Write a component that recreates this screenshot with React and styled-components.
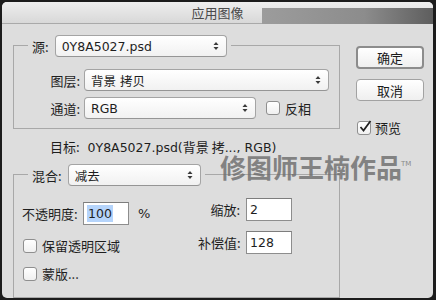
import React from "react";
import styled, { createGlobalStyle } from "styled-components";

const Global = createGlobalStyle`
  html, body {
    margin: 0;
    padding: 0;
    background: #1c1c1c;
  }
  body {
    font-family: "DejaVu Sans", "Noto Sans CJK SC", sans-serif;
    font-size: 13px;
    color: #1e1e1e;
  }
`;

const Page = styled.div`
  width: 436px;
  height: 300px;
  padding: 2px;
  box-sizing: border-box;
`;

const Window = styled.div`
  position: relative;
  width: 431px;
  height: 296px;
  background: #dddddd;
  border-radius: 5px;
  overflow: hidden;
`;

const TitleBar = styled.div`
  position: relative;
  height: 21px;
  background: linear-gradient(#eeeeee, #d8d8d8);
  border-bottom: 1px solid #a9a9a9;
  text-align: center;
  line-height: 22px;
  font-family: "Noto Sans CJK SC", sans-serif;
  font-size: 13px;
  color: #4a4a4a;
`;

const TitleShade = styled.div`
  position: absolute;
  right: 0;
  top: 6px;
  width: 171px;
  height: 16px;
  background: linear-gradient(90deg, #9c9c9c, #8c8c8c 60%, #5e5e5e);
`;

const Body = styled.div`
  display: flex;
  gap: 16px;
  padding-left: 11px;
`;

const LeftCol = styled.div`
  width: 327px;
  padding-top: 21px;
`;

const RightCol = styled.div`
  display: flex;
  flex-direction: column;
  padding-top: 22px;
  width: 68px;
`;

const Group = styled.div`
  border: 1px solid #a8a8a8;
  padding: 0 9px ${({ $bottom }) => $bottom}px 0;
  margin-top: ${({ $top }) => $top || 0}px;
`;

const Legend = styled.div`
  display: flex;
  align-items: center;
  gap: 6px;
  width: fit-content;
  margin: -11px 0 0 14px;
  padding: 0 4px;
  background: #dddddd;
`;

const Label = styled.span`
  flex: none;
  font-family: "Noto Sans CJK SC", sans-serif;
  font-size: 13px;
  white-space: nowrap;
  width: ${({ $w }) => ($w ? `${$w}px` : "auto")};
  text-align: ${({ $right }) => ($right ? "right" : "left")};
`;

const Row = styled.div`
  display: flex;
  align-items: center;
  gap: 4px;
  margin: ${({ $top }) => $top}px 0 0 30px;
`;

const SelectBox = styled.div`
  flex: none;
  display: flex;
  align-items: center;
  justify-content: space-between;
  box-sizing: border-box;
  width: ${({ $w }) => $w}px;
  height: 22px;
  padding: 0 7px 0 6px;
  border: 1px solid #a4a4a4;
  border-bottom-color: #959595;
  border-radius: 4px;
  background: linear-gradient(#ffffff, #f1f1f1);
  font-size: 13px;
`;

const SelectText = styled.span`
  font-family: "DejaVu Sans", "Noto Sans CJK SC", sans-serif;
  font-size: 12.5px;
`;

const Check = styled.span`
  display: inline-flex;
  align-items: center;
  justify-content: center;
  box-sizing: border-box;
  width: 14px;
  height: 14px;
  border: 1px solid #8f8f8f;
  border-radius: 3px;
  background: linear-gradient(#ffffff, #f0f0f0);
`;

const CheckRow = styled.div`
  display: flex;
  align-items: center;
  gap: ${({ $gap }) => $gap || 5}px;
  margin-top: ${({ $top }) => $top || 0}px;
  margin-left: ${({ $left }) => $left || 0}px;
`;

const Target = styled.div`
  margin: 10px 0 0 37px;
  line-height: 16px;
  white-space: nowrap;
  font-size: 12.5px;
`;

const Cjk = styled.span`
  font-family: "Noto Sans CJK SC", sans-serif;
  font-size: 13px;
`;

const BlendBody = styled.div`
  display: flex;
`;

const BlendLeft = styled.div`
  width: 176px;
  padding: 16px 0 0 8px;
`;

const BlendRight = styled.div`
  display: grid;
  grid-template-columns: 42px 46px;
  column-gap: 6px;
  row-gap: 10px;
  align-items: center;
  align-content: start;
  padding-top: 12px;
`;

const Field = styled.div`
  display: flex;
  align-items: center;
  box-sizing: border-box;
  width: 46px;
  height: 23px;
  padding-left: 3px;
  background: #ffffff;
  border: 1px solid #8d8d8d;
  border-top-color: #7d7d7d;
  font-size: 12.5px;
`;

const Selected = styled.span`
  background: #b5d4fb;
  padding: 1px 1px;
`;

const OpacityRow = styled.div`
  display: flex;
  align-items: center;
  gap: 5px;
`;

const Percent = styled.span`
  margin-left: 4px;
  font-size: 13px;
`;

const Button = styled.div`
  display: flex;
  align-items: center;
  justify-content: center;
  box-sizing: border-box;
  height: ${({ $primary }) => ($primary ? 23 : 22)}px;
  margin-top: ${({ $top }) => $top || 0}px;
  border: ${({ $primary }) => ($primary ? "2px solid #8c8c8c" : "1px solid #a2a2a2")};
  border-radius: 4px;
  background: linear-gradient(#ffffff, #efefef);
  font-family: "Noto Sans CJK SC", sans-serif;
  font-size: 13px;
  color: #1a1a1a;
`;

const Watermark = styled.div`
  position: absolute;
  left: 218px;
  top: 152px;
  font-family: "Noto Sans CJK SC", sans-serif;
  font-weight: 700;
  font-size: 26px;
  line-height: 26px;
  color: rgba(110, 110, 110, 0.82);
  white-space: nowrap;
`;

const Tm = styled.sup`
  position: absolute;
  left: 181px;
  top: -3px;
  font-family: "DejaVu Sans", sans-serif;
  font-weight: 400;
  font-size: 7px;
  color: #8a8a8a;
`;

const Arrows = () => (
  <svg width="6" height="10" viewBox="0 0 6 10">
    <path d="M0.5 4 L3 1 L5.5 4 Z" fill="#3a3a3a" />
    <path d="M0.5 6 L3 9 L5.5 6 Z" fill="#3a3a3a" />
  </svg>
);

const Select = ({ w, children }) => (
  <SelectBox $w={w}>
    <SelectText>{children}</SelectText>
    <Arrows />
  </SelectBox>
);

const Tick = () => (
  <svg width="14" height="13" viewBox="0 0 14 13" style={{ marginTop: -3, marginRight: -2 }}>
    <path d="M2.5 7 L5.5 10.5 L12.5 1" fill="none" stroke="#222" strokeWidth="1.8" />
  </svg>
);

export default function App() {
  return (
    <Page>
      <Global />
      <Window>
        <TitleBar>
          应用图像
          <TitleShade />
        </TitleBar>
        <Body>
          <LeftCol>
            <Group $bottom={9}>
              <Legend>
                <Label>源:</Label>
                <Select w={172}>0Y8A5027.psd</Select>
              </Legend>
              <Row $top={12}>
                <Label $w={36} $right>
                  图层:
                </Label>
                <Select w={245}>背景 拷贝</Select>
              </Row>
              <Row $top={6}>
                <Label $w={36} $right>
                  通道:
                </Label>
                <Select w={172}>RGB</Select>
                <CheckRow $left={6} $gap={5}>
                  <Check />
                  <Label>反相</Label>
                </CheckRow>
              </Row>
            </Group>
            <Target>
              <Cjk>目标:</Cjk>&nbsp; 0Y8A5027.psd(<Cjk>背景 拷</Cjk>..., RGB)
            </Target>
            <Group $top={18} $bottom={14}>
              <Legend>
                <Label>混合:</Label>
                <Select w={133}>减去</Select>
              </Legend>
              <BlendBody>
                <BlendLeft>
                  <OpacityRow>
                    <Label $w={56}>不透明度:</Label>
                    <Field>
                      <Selected>100</Selected>
                    </Field>
                    <Percent>%</Percent>
                  </OpacityRow>
                  <CheckRow $top={11} $left={1}>
                    <Check />
                    <Label>保留透明区域</Label>
                  </CheckRow>
                  <CheckRow $top={9} $left={1}>
                    <Check />
                    <Label>蒙版...</Label>
                  </CheckRow>
                </BlendLeft>
                <BlendRight>
                  <Label $right>缩放:</Label>
                  <Field>2</Field>
                  <Label $right>补偿值:</Label>
                  <Field>128</Field>
                </BlendRight>
              </BlendBody>
            </Group>
          </LeftCol>
          <RightCol>
            <Button $primary>确定</Button>
            <Button $top={10}>取消</Button>
            <CheckRow $top={17} $left={1} $gap={4}>
              <Check>
                <Tick />
              </Check>
              <Label>预览</Label>
            </CheckRow>
          </RightCol>
        </Body>
        <Watermark>
          修图师王楠作品
          <Tm>TM</Tm>
        </Watermark>
      </Window>
    </Page>
  );
}
